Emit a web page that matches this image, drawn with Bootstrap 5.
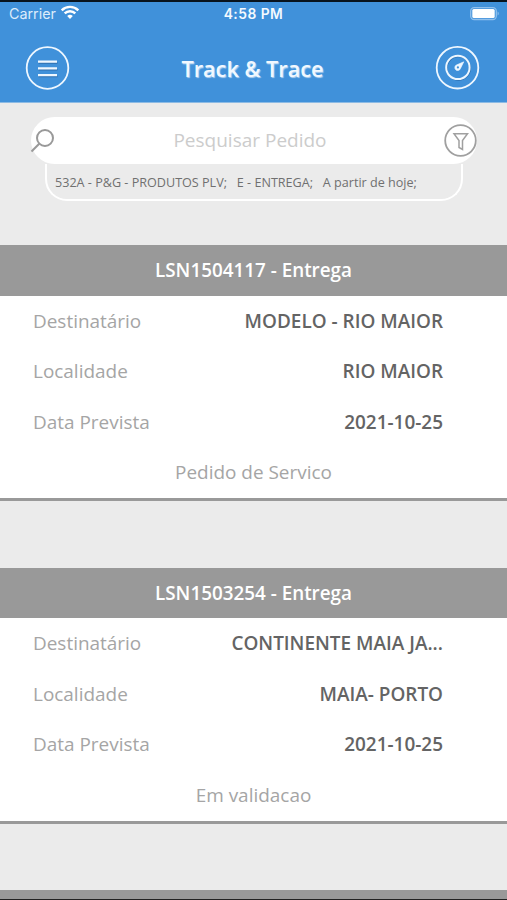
<!DOCTYPE html>
<html lang="pt">
<head>
<meta charset="utf-8">
<meta name="viewport" content="width=device-width, initial-scale=1">
<title>Track &amp; Trace</title>
<link href="https://cdn.jsdelivr.net/npm/bootstrap@5.3.0/dist/css/bootstrap.min.css" rel="stylesheet">
<style>
body { font-family: "Open Sans", "Noto Sans", sans-serif; background: #ebebeb; }
.screen { height: 900px; border-top: 2px solid #08131d; border-bottom: 1px solid #222; }
.app-head { background: #4091da; height: 101px; flex: none; border-bottom: 1px solid #8dbbe4; }
.status { height: 24px; font-family: Inter, "Liberation Sans", sans-serif; font-size: 13.5px; line-height: 24px; padding: 0 7px 0 9px; color: #f4faff; }
.status .net { color: #dcecfb; font-size: 14.3px; }
.clock { font-size: 13.8px; letter-spacing: .5px; white-space: nowrap; }
.bar { height: 85px; padding: 0 27px 0 25px; margin-top: -1px; }
.app-title { font-size: 21.7px; font-weight: 600; color: #f1f8ff; text-shadow: 1px 1px 1px #b4d3f0; padding-top: 3px; }
.search-zone { height: 142px; padding: 14px 30px 0 31px; flex: none; }
.search-pill { height: 47px; border-radius: 24px; background: #fff; font-size: 19px; color: #ccc; }
.search-pill .glass { margin-left: -1px; margin-top: 1px; }
.filters { height: 37px; margin: 0 14px 0 14px; border: 2px solid #fff; border-top: 0; border-radius: 0 0 22px 22px; font-size: 12.6px; line-height: 38px; color: #707070; padding-left: 8px; white-space: pre; }
.order { height: 256px; margin-bottom: 66.5px; flex: none; background: #fff; border-bottom: 3px solid #999; font-size: 18.95px; }
.order-title { height: 50.6px; line-height: 51px; background: #999; color: #fff; font-weight: 600; font-size: 18.85px; }
.line { height: 50.6px; line-height: 50.6px; padding: 0 64px 0 33px; color: #a5a5a5; }
.line b { font-weight: 600; color: #646464; }
</style>
<script src="https://cdn.jsdelivr.net/npm/bootstrap@5.3.0/dist/js/bootstrap.bundle.min.js"></script>
</head>
<body>
<div class="screen d-flex flex-column overflow-hidden">
  <header class="app-head">
    <div class="status d-flex align-items-center justify-content-between position-relative">
      <div class="net d-flex align-items-center"><span>Carrier</span>
        <svg class="ms-1 mb-1" width="20" height="16" viewBox="0 0 20 16" fill="none" stroke="#fff" stroke-width="2.4"><path d="M1.700 6.300a11.800 11.800 0 0 1 16.600 0M4.700 9.400a7.500 7.500 0 0 1 10.600 0"/><path d="M10 15l-2.800-2.900a4 4 0 0 1 5.600 0z" fill="#fff" stroke="none"/></svg>
      </div>
      <div class="clock position-absolute start-50 translate-middle-x fw-semibold">4:58 PM</div>
      <svg width="30" height="14" viewBox="0 0 30 14"><rect x=".7" y=".7" width="25.600" height="11.800" rx="3.500" fill="none" stroke="#8fc0ed" stroke-width="1.300"/><rect x="2.300" y="2.100" width="22.400" height="9" rx="1.500" fill="#fff"/><path d="M27.600 4.600v4a2.300 2.300 0 0 0 0-4z" fill="#8fc0ed"/></svg>
    </div>
    <div class="bar d-flex align-items-center justify-content-between">
      <svg width="45" height="45" viewBox="0 0 45 45" fill="none" stroke="#eef7ff"><circle cx="22.500" cy="23" r="20.800" stroke-width="1.800"/><path d="M13.500 18H32.500M13.500 24.700H32.500M13.500 31.400H32.500" stroke="#2e6fae" stroke-width="1.500"/><path d="M13 16.700H32M13 23.400H32M13 30.100H32" stroke-width="2.200"/></svg>
      <h1 class="app-title m-0">Track &amp; Trace</h1>
      <svg width="45" height="45" viewBox="0 0 45 45" fill="none" stroke="#eef7ff"><circle cx="22.500" cy="22.700" r="20.800" stroke-width="1.800"/><circle cx="23.500" cy="23.300" r="11.700" stroke="#2e6fae" stroke-width="1.500"/><circle cx="22.900" cy="22.400" r="11.700" stroke-width="2"/><path d="M28.800 16.800l-3.300 6.600a2.900 2.900 0 1 1-3.600-3.600z" fill="#eef7ff" stroke-width=".6"/><circle cx="22.900" cy="22.400" r="1.100" fill="#4091da" stroke="none"/></svg>
    </div>
  </header>
  <section class="search-zone">
    <div class="search-pill d-flex align-items-center justify-content-between">
      <svg class="glass" width="26" height="26" viewBox="0 0 26 26" fill="none" stroke="#999" stroke-width="2"><circle cx="15" cy="10" r="8"/><path d="M9.200 15.800L1.500 23.500"/></svg>
      <span class="hint">Pesquisar Pedido</span>
      <svg width="33" height="33" viewBox="0 0 33 33" fill="none" stroke="#a0a0a0"><circle cx="16.500" cy="16.500" r="15.300" stroke-width="1.800"/><path d="M10 9.700H23.500L18.500 16.500V25.500L15 23.500V16.500z" stroke-width="1.500"/></svg>
    </div>
    <div class="filters"><span>532A - P&amp;G - PRODUTOS PLV;   E - ENTREGA;   A partir de hoje;</span></div>
  </section>
  <article class="order">
    <div class="order-title text-center"><span>LSN1504117 - Entrega</span></div>
    <div class="line d-flex justify-content-between"><span>Destinatário</span><b>MODELO - RIO MAIOR</b></div>
    <div class="line d-flex justify-content-between"><span>Localidade</span><b>RIO MAIOR</b></div>
    <div class="line d-flex justify-content-between"><span>Data Prevista</span><b>2021-10-25</b></div>
    <div class="text-center line px-0"><span>Pedido de Servico</span></div>
  </article>
  <article class="order">
    <div class="order-title text-center"><span>LSN1503254 - Entrega</span></div>
    <div class="line d-flex justify-content-between"><span>Destinatário</span><b>CONTINENTE MAIA JA...</b></div>
    <div class="line d-flex justify-content-between"><span>Localidade</span><b>MAIA- PORTO</b></div>
    <div class="line d-flex justify-content-between"><span>Data Prevista</span><b>2021-10-25</b></div>
    <div class="text-center line px-0"><span>Em validacao</span></div>
  </article>
  <article class="order"><div class="order-title"></div></article>
</div>
</body>
</html>
